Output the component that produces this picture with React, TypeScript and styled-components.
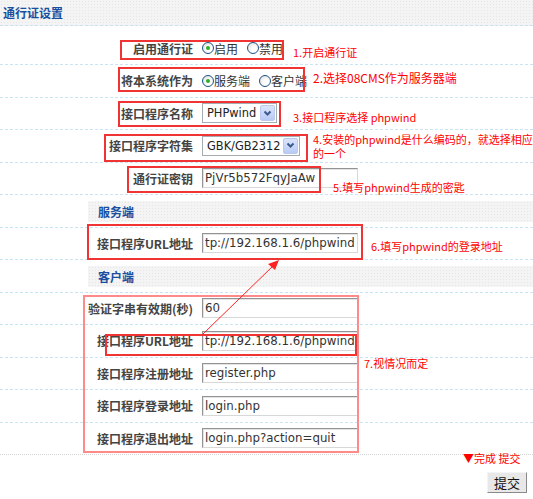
import React from "react";
import styled, { createGlobalStyle, css } from "styled-components";

const GlobalStyle = createGlobalStyle`
  html, body { margin: 0; padding: 0; background: #fff; }
  body {
    font-family: "Noto Sans CJK SC", "DejaVu Sans", sans-serif;
    font-size: 12px;
    color: #333;
  }
`;

const dotted = css`
  background-color: #f4f4f4;
  background-image: radial-gradient(#e6e6e6 0.8px, transparent 0.9px);
  background-size: 3px 3px;
`;

const Page = styled.div`
  position: relative;
  width: 533px;
  height: 499px;
  overflow: hidden;
`;

const Header = styled.div`
  ${dotted};
  height: 25px;
  border-bottom: 1px dashed #c6e2f3;
  display: flex;
  align-items: center;
  padding-left: 3px;
`;

const Title = styled.h2`
  margin: 0;
  font-size: 12px;
  font-weight: bold;
  color: #1a4fa0;
`;

const Form = styled.div`
  margin-top: 6.5px;
`;

const Row = styled.div<{ $last?: boolean }>`
  display: grid;
  grid-template-columns: 193px 1fr;
  align-items: center;
  height: 32.5px;
  box-sizing: border-box;
  border-bottom: 1px ${(p) => (p.$last ? "dotted #d6d6d6" : "dashed #c9e4f5")};
`;

const Label = styled.div`
  text-align: right;
  font-weight: bold;
  color: #444;
  white-space: nowrap;
`;

const Field = styled.div`
  display: flex;
  align-items: center;
  padding-left: 9px;
`;

const SectionRow = styled.div`
  height: 32.5px;
  box-sizing: border-box;
  padding: 6px 0 4.5px 88px;
  border-bottom: 1px dashed #c9e4f5;
`;

const Band = styled.div`
  ${dotted};
  height: 100%;
  display: flex;
  align-items: center;
  padding-left: 10px;
  font-weight: bold;
  font-size: 12px;
  color: #1a4fa0;
`;

const RadioItem = styled.label`
  display: inline-flex;
  align-items: center;
  margin-right: 9px;
  color: #333;
`;

const RadioDot = styled.span<{ $on?: boolean }>`
  position: relative;
  width: 12px;
  height: 12px;
  box-sizing: border-box;
  border: 1px solid #1d5287;
  border-radius: 50%;
  background: radial-gradient(circle at 65% 65%, #fff 30%, #d7d7d0 100%);
  &::after {
    content: "";
    display: ${(p) => (p.$on ? "block" : "none")};
    position: absolute;
    left: 3px;
    top: 3px;
    width: 4px;
    height: 4px;
    border-radius: 50%;
    background: #2fae2f;
  }
`;

const Select = styled.div<{ $w: number }>`
  display: flex;
  align-items: center;
  justify-content: space-between;
  width: ${(p) => p.$w}px;
  height: 20px;
  box-sizing: border-box;
  border: 1px solid #a5acb2;
  background: #fff;
  padding: 0 1px 0 4px;
  font-family: "DejaVu Sans", sans-serif;
  font-size: 11.4px;
  color: #222;
`;

const SelectButton = styled.span`
  display: flex;
  align-items: center;
  justify-content: center;
  width: 15px;
  height: 16px;
  box-sizing: border-box;
  border: 1px solid #b9c9ef;
  border-radius: 2px;
  background: linear-gradient(#dbe4fb, #b8caf5);
`;

const TextBox = styled.input`
  width: 156px;
  height: 20px;
  box-sizing: border-box;
  margin: 0;
  padding: 0 0 0 2px;
  border: 1px solid;
  border-color: #939393 #d8d8d8 #d8d8d8 #939393;
  box-shadow: inset 1px 1px 0 #e4e4e4;
  font-family: "DejaVu Sans", sans-serif;
  font-size: 11.8px;
  color: #333;
  outline: none;
`;

const Footer = styled.div`
  display: flex;
  justify-content: flex-end;
  padding: 17px 6px 0 0;
`;

const SubmitButton = styled.button`
  width: 40px;
  height: 21px;
  padding: 0;
  border: 1px solid;
  border-color: #f4f4f4 #8a8a8a #8a8a8a #f4f4f4;
  background: #e8e8e8;
  font-family: "Noto Sans CJK SC", sans-serif;
  font-size: 13px;
  color: #111;
`;

/* annotation layer drawn over the form */
const Mark = styled.div<{ $x: number; $y: number; $w: number; $h: number; $soft?: boolean }>`
  position: absolute;
  left: ${(p) => p.$x}px;
  top: ${(p) => p.$y}px;
  width: ${(p) => p.$w}px;
  height: ${(p) => p.$h}px;
  box-sizing: border-box;
  border: 2px solid ${(p) => (p.$soft ? "#ff8a8a" : "#f03434")};
  pointer-events: none;
`;

const Note = styled.div<{ $x: number; $y: number; $size?: number }>`
  position: absolute;
  left: ${(p) => p.$x}px;
  top: ${(p) => p.$y}px;
  font-size: ${(p) => p.$size || 11}px;
  line-height: 14px;
  color: #f00;
  white-space: nowrap;
  pointer-events: none;
`;

const Arrow = styled.svg`
  position: absolute;
  left: 0;
  top: 0;
  pointer-events: none;
`;

function Chevron() {
  return (
    <svg width="9" height="7" viewBox="0 0 9 7">
      <polyline points="1.5,1.5 4.5,4.5 7.5,1.5" fill="none" stroke="#3d5a8c" strokeWidth="2" />
    </svg>
  );
}

function Radio({ on, text }: { on?: boolean; text: string }) {
  return (
    <RadioItem>
      <RadioDot $on={on} />
      {text}
    </RadioItem>
  );
}

const clientRows = [
  ["验证字串有效期(秒)", "60"],
  ["接口程序URL地址", "tp://192.168.1.6/phpwind"],
  ["接口程序注册地址", "register.php"],
  ["接口程序登录地址", "login.php"],
  ["接口程序退出地址", "login.php?action=quit"],
];

export default function App() {
  return (
    <Page>
      <GlobalStyle />
      <Header>
        <Title>通行证设置</Title>
      </Header>
      <Form>
        <Row>
          <Label>启用通行证</Label>
          <Field>
            <Radio on text="启用" />
            <Radio text="禁用" />
          </Field>
        </Row>
        <Row>
          <Label>将本系统作为</Label>
          <Field>
            <Radio on text="服务端" />
            <Radio text="客户端" />
          </Field>
        </Row>
        <Row>
          <Label>接口程序名称</Label>
          <Field>
            <Select $w={75}>
              PHPwind
              <SelectButton><Chevron /></SelectButton>
            </Select>
          </Field>
        </Row>
        <Row>
          <Label>接口程序字符集</Label>
          <Field>
            <Select $w={98}>
              GBK/GB2312
              <SelectButton><Chevron /></SelectButton>
            </Select>
          </Field>
        </Row>
        <Row>
          <Label>通行证密钥</Label>
          <Field>
            <TextBox readOnly value="PjVr5b572FqyJaAw" />
          </Field>
        </Row>
        <SectionRow>
          <Band>服务端</Band>
        </SectionRow>
        <Row>
          <Label>接口程序URL地址</Label>
          <Field>
            <TextBox readOnly value="tp://192.168.1.6/phpwind" />
          </Field>
        </Row>
        <SectionRow>
          <Band>客户端</Band>
        </SectionRow>
        {clientRows.map(([label, value], i) => (
          <Row key={label} $last={i === clientRows.length - 1}>
            <Label>{label}</Label>
            <Field>
              <TextBox readOnly value={value} />
            </Field>
          </Row>
        ))}
      </Form>
      <Footer>
        <SubmitButton>提交</SubmitButton>
      </Footer>

      <Mark $x={120} $y={40} $w={164} $h={20} />
      <Mark $x={118} $y={67} $w={187} $h={25} />
      <Mark $x={118} $y={101} $w={163} $h={26} />
      <Mark $x={104} $y={134} $w={204} $h={28} />
      <Mark $x={127} $y={166} $w={194} $h={27} />
      <Mark $x={87} $y={224} $w={276} $h={36} />
      <Mark $x={83} $y={295} $w={276} $h={158} $soft />
      <Mark $x={105} $y={334} $w={252} $h={22} />

      <Note $x={293} $y={45}>1.开启通行证</Note>
      <Note $x={313} $y={71} $size={12}>2.选择08CMS作为服务器端</Note>
      <Note $x={293} $y={110}>3.接口程序选择 phpwind</Note>
      <Note $x={313} $y={132}>
        4.安装的phpwind是什么编码的，就选择相应
        <br />
        的一个
      </Note>
      <Note $x={333} $y={180}>5.填写phpwind生成的密匙</Note>
      <Note $x={371} $y={239}>6.填写phpwind的登录地址</Note>
      <Note $x={364} $y={356}>7.视情况而定</Note>
      <Note $x={463} $y={451}>▼完成 提交</Note>

      <Arrow width="533" height="499" viewBox="0 0 533 499">
        <line x1="203" y1="334" x2="274" y2="265" stroke="#f22" strokeWidth="1" />
        <polygon points="279,260 268,264 275,270" fill="#f22" />
      </Arrow>
    </Page>
  );
}
